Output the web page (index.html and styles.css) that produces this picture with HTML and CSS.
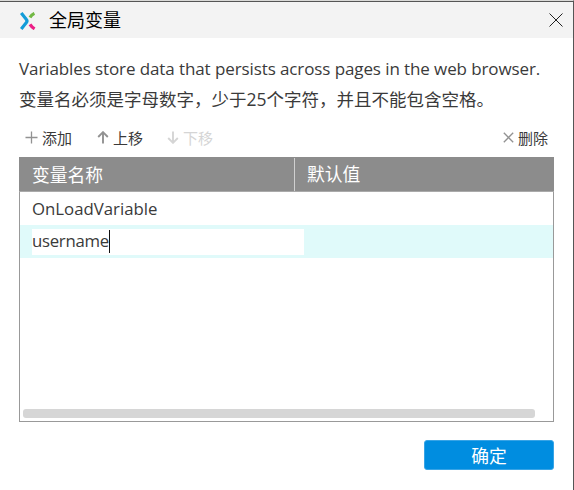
FILE: index.html
```
<!DOCTYPE html>
<html lang="zh-CN">
<head>
<meta charset="utf-8">
<title>全局变量</title>
<link rel="stylesheet" href="styles.css">
</head>
<body>
<div class="dialog">
  <header class="titlebar">
    <svg class="logo" width="16" height="18" viewBox="0 0 16 18" fill="none" stroke-width="3.2">
      <path d="M1.2 1L6.4 7.6Q7.6 9 6.4 10.4L1.2 17" stroke="#139cd8"/>
      <path d="M10 5.4Q11.4 2.8 14.4 1.4" stroke="#72b844"/>
      <path d="M10 12.4Q11.6 15 14.6 16.8" stroke="#ec1e86"/>
    </svg>
    <h1 class="title">全局变量</h1>
    <svg class="close" width="14" height="14" viewBox="0 0 14 14" stroke="#222" stroke-width="1"><path d="M.5 .5l13 13M13.5 .5l-13 13"/></svg>
  </header>
  <main class="content">
    <p class="intro intro-en">Variables store data that persists across pages in the web browser.</p>
    <p class="intro intro-zh">变量名必须是字母数字，少于25个字符，并且不能包含空格。</p>
    <div class="toolbar">
      <span class="tool add"><svg width="13" height="13" viewBox="0 0 13 13"><path d="M6.5 .5v12M.5 6.5h12"/></svg>添加</span>
      <span class="tool up"><svg width="12" height="13" viewBox="0 0 12 13"><path class="thick" d="M6 12.5V1.5M1.2 6L6 1.2 10.8 6"/></svg>上移</span>
      <span class="tool down"><svg width="12" height="13" viewBox="0 0 12 13"><path class="thick" d="M6 .5v11M1.2 7L6 11.8 10.8 7"/></svg>下移</span>
      <span class="tool delete"><svg width="11" height="11" viewBox="0 0 11 11"><path d="M.8 .8l9.4 9.4M10.2 .8L.8 10.2"/></svg>删除</span>
    </div>
    <div class="table">
      <div class="head"><div class="name">变量名称</div><div class="value">默认值</div></div>
      <div class="row">OnLoadVariable</div>
      <div class="row selected"><div class="editor"><span class="entry">username</span><span class="caret"></span></div></div>
      <div class="scrollbar"></div>
    </div>
    <button class="ok">确定</button>
  </main>
</div>
</body>
</html>
```
FILE: styles.css
```
* { box-sizing: border-box; }
body {
  margin: 0;
  background: #fff;
  color: #3a3a3a;
  font-family: "Open Sans", "Noto Sans CJK SC", sans-serif;
}
.dialog {
  height: 490px;
  border-top: 1px solid #d9d9d7;
  border-right: 1px solid #555;
  overflow: hidden;
}
.titlebar {
  height: 37px;
  border-top: 1px solid #555;
  background: #f3f3f3;
  display: flex;
  align-items: center;
  padding: 0 10px 0 20px;
}
.logo { margin-top: 1px; }
.title {
  margin: -2px auto 0 13px;
  font: 400 18px/34px "Noto Sans CJK SC", sans-serif;
  color: #000;
}
.close { margin-top: 0; }
.content {
  display: flex;
  flex-direction: column;
  padding: 15px 19px 0;
}
.intro {
  margin: 0;
  height: 31px;
  line-height: 31px;
  white-space: nowrap;
}
.intro-en { font-size: 17px; letter-spacing: -0.1px; }
.intro-zh { font-size: 17.5px; }
.toolbar {
  height: 42px;
  display: flex;
  align-items: center;
  padding: 2px 6px 0 6px;
  font-size: 15px;
}
.tool { display: flex; align-items: center; gap: 4px; }
.tool svg { fill: none; stroke: #929292; stroke-width: 1.3; }
.tool .thick { stroke-width: 1.9; }
.up { margin-left: 25px; }
.down { margin-left: 24px; color: #d5d5d5; }
.down svg { stroke: #d5d5d5; }
.delete { margin-left: auto; }
.table {
  height: 265px;
  border: 1px solid #999;
  display: flex;
  flex-direction: column;
}
.head {
  height: 35px;
  margin: -1px -1px 0;
  border-bottom: 1px solid #aaa;
  background: #8c8c8c;
  color: #fff;
  display: flex;
  font-size: 17.8px;
  line-height: 35px;
}
.name {
  width: 276px;
  height: 33px;
  margin-top: 1px;
  line-height: 34px;
  padding-left: 13px;
  border-right: 1px solid #d0d0d0;
}
.value { padding-left: 12px; }
.row {
  height: 33px;
  padding-left: 12px;
  font-size: 16.8px;
  line-height: 34px;
}
.selected {
  padding-top: 4px;
  background: #e0fafa;
}
.editor {
  width: 272px;
  height: 26px;
  background: #fff;
  display: flex;
  align-items: center;
  line-height: 23px;
}
.entry { height: 26px; letter-spacing: -0.28px; }
.caret { width: 1px; height: 23px; margin-top: -2px; background: #111; }
.scrollbar {
  width: 512px;
  height: 9px;
  margin: auto 0 3px 3px;
  border-radius: 3px;
  background: #d6d6d6;
}
.ok {
  width: 130px;
  height: 30px;
  margin: 18px 0 0;
  align-self: flex-end;
  border: 1px solid #38a4e6;
  border-radius: 3px;
  background: #008de0;
  color: #fff;
  font: 400 17.8px/28px "Noto Sans CJK SC", sans-serif;
  padding: 0;
}
```
